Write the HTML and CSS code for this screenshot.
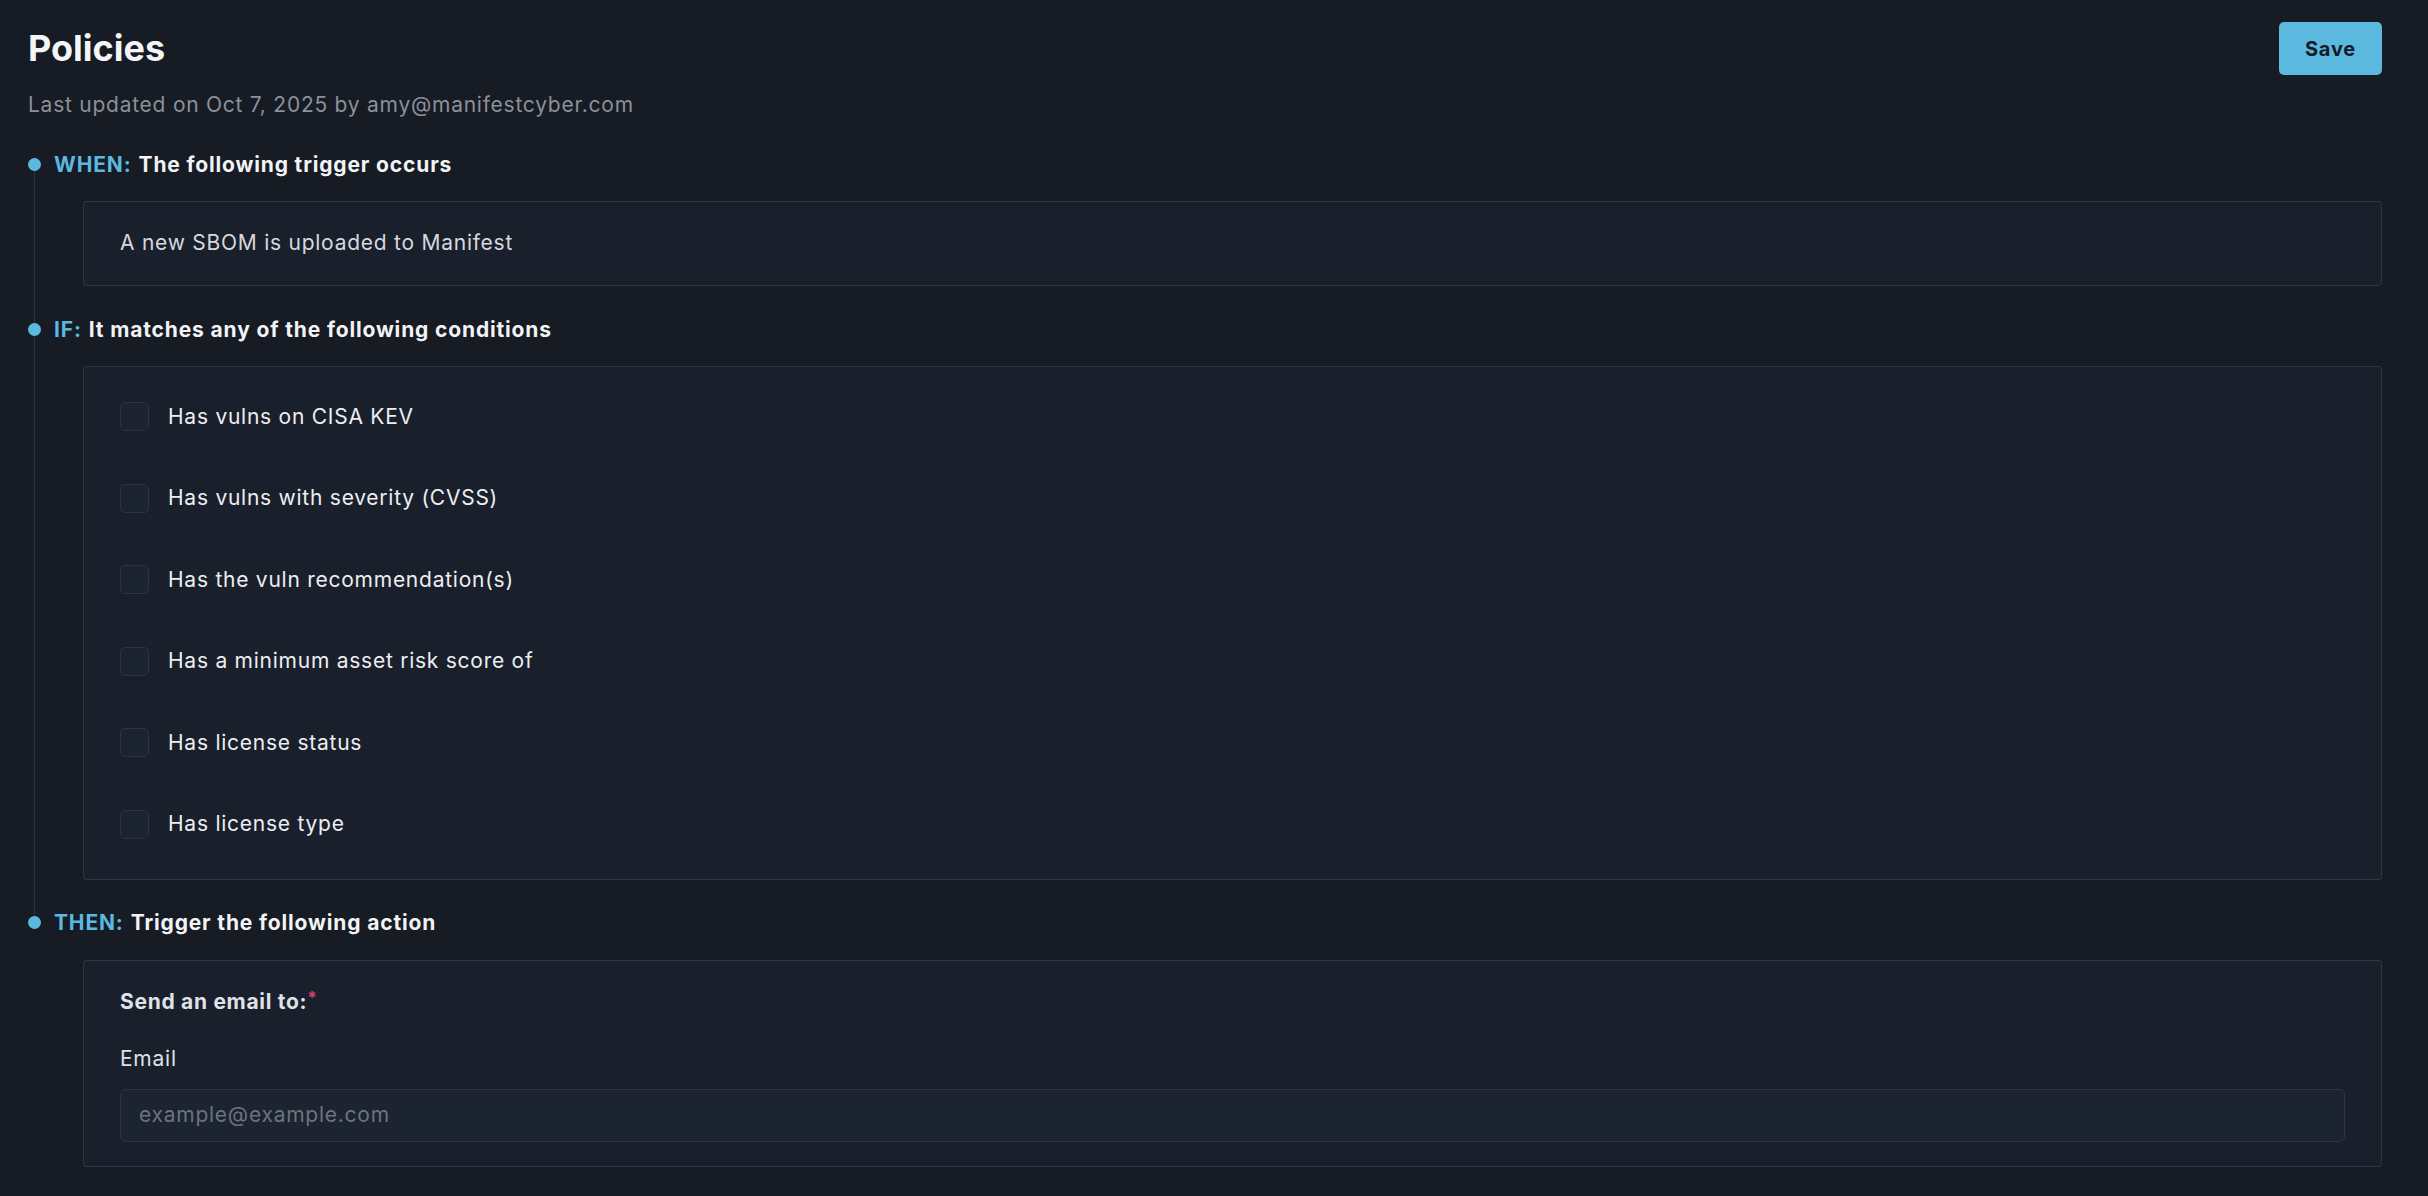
FILE: index.html
```html
<!DOCTYPE html>
<html lang="en">
<head>
<meta charset="utf-8">
<title>Policies</title>
<link rel="stylesheet" href="styles.css">
</head>
<body>
<div class="page">
  <header class="top">
    <div class="titles">
      <h1 class="title">Policies</h1>
      <p class="subtitle">Last updated on Oct 7, 2025 by amy@manifestcyber.com</p>
    </div>
    <button class="save">Save</button>
  </header>

  <div class="timeline">
    <section class="step">
      <div class="step-head"><span class="dot"></span><span class="kw">WHEN:</span><span class="step-title">The following trigger occurs</span></div>
      <div class="card card-when">A new SBOM is uploaded to Manifest</div>
    </section>

    <section class="step">
      <div class="step-head"><span class="dot"></span><span class="kw">IF:</span><span class="step-title">It matches any of the following conditions</span></div>
      <div class="card card-if">
        <label class="opt"><span class="box"></span><span>Has vulns on CISA KEV</span></label>
        <label class="opt"><span class="box"></span><span>Has vulns with severity (CVSS)</span></label>
        <label class="opt"><span class="box"></span><span>Has the vuln recommendation(s)</span></label>
        <label class="opt"><span class="box"></span><span>Has a minimum asset risk score of</span></label>
        <label class="opt"><span class="box"></span><span>Has license status</span></label>
        <label class="opt"><span class="box"></span><span>Has license type</span></label>
      </div>
    </section>

    <section class="step">
      <div class="step-head"><span class="dot"></span><span class="kw">THEN:</span><span class="step-title">Trigger the following action</span></div>
      <div class="card card-then">
        <div class="then-label">Send an email to:<span class="req">*</span></div>
        <div class="field-label">Email</div>
        <div class="input"><span class="placeholder">example@example.com</span></div>
      </div>
    </section>
  </div>
</div>
</body>
</html>
```

FILE: styles.css
```css
* { box-sizing: border-box; }
html, body { margin: 0; padding: 0; }
body {
  background: #161b24;
  font-family: Inter, "Noto Sans", sans-serif;
  color: #e6e8ec;
  width: 2428px;
  height: 1196px;
  overflow: hidden;
}
.page {
  padding: 22px 46px 0 28px;
}
.top {
  display: flex;
  justify-content: space-between;
  align-items: flex-start;
}
.title {
  margin: 4px 0 0 0;
  font-size: 36px;
  line-height: 44px;
  font-weight: 700;
  color: #f4f5f7;
}
.subtitle {
  margin: 19px 0 0 0;
  font-size: 21px;
  line-height: 32px;
  letter-spacing: 0.75px;
  color: #8b9099;
}
.save {
  width: 103px;
  height: 53px;
  border: 0;
  border-radius: 5px;
  background: #5bb9e0;
  color: #151b24;
  font-family: Inter, sans-serif;
  font-weight: 700;
  font-size: 20px;
  letter-spacing: 0.8px;
}
.timeline {
  position: relative;
  margin-top: 27px;
}
.timeline::before {
  content: "";
  position: absolute;
  left: 6px;
  top: 16px;
  bottom: 243px;
  width: 1px;
  background: #2e3542;
}
.step + .step { margin-top: 27px; }
.step-head {
  display: flex;
  align-items: center;
  height: 32px;
  font-size: 21px;
  font-weight: 700;
  letter-spacing: 0.85px;
  position: relative;
}
.dot {
  width: 13px;
  height: 13px;
  border-radius: 50%;
  background: #5bb9e0;
  margin-right: 13px;
  flex: none;
}
.kw { color: #5bb9e0; margin-right: 7px; }
.step-title { color: #f2f3f5; }
.card {
  margin: 21px 0 0 55px;
  background: #1a1f2c;
  border: 1px solid #2e3545;
  border-radius: 3px;
  font-size: 21px;
  line-height: 32px;
  letter-spacing: 0.75px;
  color: #d6d9df;
}
.card-when {
  padding: 25px 36px 26px;
}
.card-if {
  padding: 35px 36px 40px;
  display: flex;
  flex-direction: column;
  gap: 52.6px;
}
.opt {
  display: flex;
  align-items: center;
  height: 29px;
  color: #eceef1;
}
.box {
  width: 29px;
  height: 29px;
  border: 1px solid #2c3444;
  background: #1c2331;
  border-radius: 5px;
  margin-right: 19px;
  flex: none;
}
.card-then {
  padding: 25px 36px 24px;
}
.then-label {
  font-weight: 700;
  letter-spacing: 0.7px;
  color: #dfe2e7;
}
.req { color: #d1416f; font-size: 17px; vertical-align: top; position: relative; top: -4px; }
.field-label {
  margin-top: 25px;
  color: #dfe2e7;
}
.input {
  margin-top: 14px;
  height: 53px;
  background: #1c2331;
  border: 1px solid #2e3646;
  border-radius: 6px;
  padding: 0 18px;
  display: flex;
  align-items: center;
}
.placeholder { color: #6d737d; }
```
